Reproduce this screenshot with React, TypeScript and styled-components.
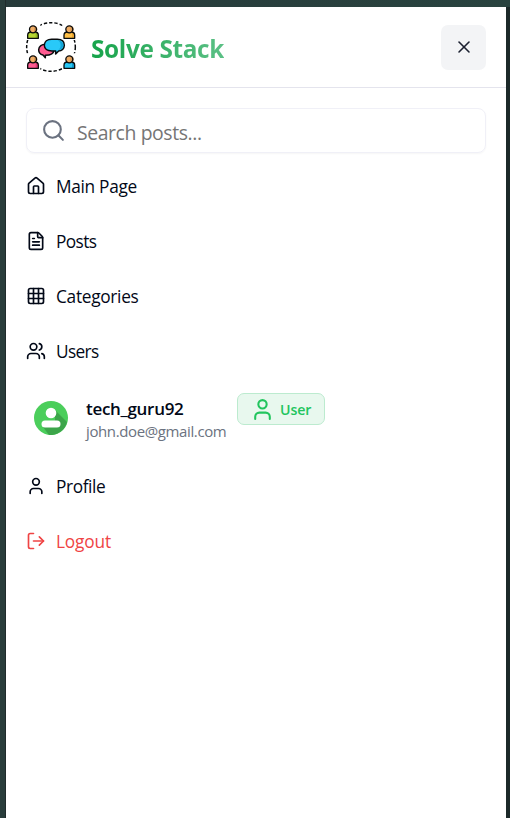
import React from "react";
import styled, { createGlobalStyle } from "styled-components";
import { FileText, Grid3x3, House, LogOut, Search, User, Users, X } from "lucide-react";

const GlobalStyle = createGlobalStyle`
  * { box-sizing: border-box; }
  body { margin: 0; background: #1c2929; font-family: "Segoe UI", "Open Sans", "Noto Sans", sans-serif; }
  button, input { font: inherit; }
`;

const Backdrop = styled.div`
  height: 818px;
  padding: 7px 4px 0 6px;
  overflow: hidden;
  background: linear-gradient(90deg, #293d3b 0 5px, #202b2b 5px 6px, transparent 6px),
    linear-gradient(90deg, #273a3a, #29433f) top / 100% 7px no-repeat, #1c2929;
`;

const Panel = styled.aside`
  height: 811px;
  background: #fff;
  color: #020817;
`;

const Header = styled.header`
  display: flex;
  align-items: center;
  justify-content: space-between;
  height: 81px;
  padding: 0 20px 0 16px;
  border-bottom: 1px solid #e4e4ed;
`;

const Brand = styled.div`
  display: flex;
  align-items: center;
  gap: 11px;
`;

const BrandName = styled.h1`
  margin: 4px 0 0;
  font-size: 24.4px;
  line-height: 36px;
  font-weight: 700;
  letter-spacing: -0.36px;
  white-space: nowrap;
  color: transparent;
  background: linear-gradient(90deg, #16a34a, #5bc085);
  background-clip: text;
`;

const CloseButton = styled.button`
  display: grid;
  place-items: center;
  width: 45px;
  height: 45px;
  padding: 0;
  border: 0;
  border-radius: 7px;
  background: #f3f4f6;
  color: #1b2030;
`;

const Content = styled.div`
  padding: 20px;
`;

const SearchField = styled.label`
  display: flex;
  align-items: center;
  gap: 11px;
  height: 45px;
  padding: 0 14px;
  border: 1px solid #f0f0f7;
  border-radius: 8px;
  box-shadow: 0 1px 2px rgba(0, 0, 0, 0.04);
  color: #6b7280;
`;

const SearchInput = styled.input`
  flex: 1;
  min-width: 0;
  height: 40px;
  padding: 3px 0 0;
  border: 0;
  outline: 0;
  background: transparent;
  font-size: 19.4px;
  letter-spacing: -0.4px;
  &::placeholder { color: #757575; opacity: 1; }
`;

const Menu = styled.nav`
  display: flex;
  flex-direction: column;
  gap: 30px;
  padding-top: 20px;
`;

const MenuItem = styled.a<{ $danger?: boolean; $tracking: number }>`
  display: flex;
  align-items: center;
  gap: 10px;
  height: 25px;
  color: ${({ $danger }) => ($danger ? "#ef4444" : "#020817")};
  font-size: 17.3px;
  letter-spacing: ${({ $tracking }) => $tracking}px;
  svg { flex: none; }
  span { padding-top: 2px; }
`;

const Account = styled.section`
  display: flex;
  height: 50px;
  align-items: flex-start;
  padding: 1px 0 0 8px;
`;

const AccountText = styled.div`
  width: 159px;
  padding: 3px 0 0 18px;
  white-space: nowrap;
`;

const Username = styled.div`
  font-size: 17px;
  line-height: 24px;
  font-weight: 600;
  letter-spacing: -0.3px;
`;

const Email = styled.div`
  color: #6b7280;
  font-size: 15px;
  line-height: 20px;
  letter-spacing: -0.38px;
`;

const RoleBadge = styled.span`
  display: flex;
  align-items: center;
  gap: 5px;
  width: 88px;
  height: 32px;
  margin: -1px 0 0 10px;
  padding: 0 0 0 12px;
  border: 1px solid #bcebcf;
  border-radius: 7px;
  background: #e8f8ee;
  color: #22c55e;
  font-size: 14.2px;
  font-weight: 600;
  letter-spacing: -0.15px;
  svg { flex: none; }
  span { padding-top: 1px; }
`;

const AvatarIcon = styled.svg`
  flex: none;
  margin-top: 7px;
`;

function Member({ x, y, shirt, shade }: { x: number; y: number; shirt: string; shade: string }) {
  return (
    <g transform={`translate(${x} ${y})`}>
      <path d="M-16 27v-9Q-16 8-6 8H6q10 0 10 10v9z" fill={shirt} />
      <path d="M6 8q10 0 10 10v9H8V15z" fill={shade} />
      <path d="M-16 27v-9Q-16 8-6 8H6q10 0 10 10v9z" stroke="#080b0d" strokeWidth="4" strokeLinejoin="round" />
      <circle r="10.5" fill="#f1ad65" />
      <path d="M3-10a10 10 0 0 1 0 20z" fill="#d99752" />
      <circle r="10.5" stroke="#080b0d" strokeWidth="4" />
    </g>
  );
}

function Logo() {
  return (
    <svg width="58" height="58" viewBox="0 0 174 174" fill="none" aria-hidden="true">
      <circle cx="87" cy="87" r="73" stroke="#080b0d" strokeWidth="4.4" strokeDasharray="10 6" />
      <g fill="#fff">
        <path d="M12 16h43v50H12zM121 16h43v50h-43zM12 106h43v50H12zM121 106h43v50h-43z" />
      </g>
      <Member x={33} y={34} shirt="#b6d532" shade="#91b51f" />
      <Member x={142} y={34} shirt="#ffc149" shade="#eaa52f" />
      <Member x={33} y={124} shirt="#ff5b91" shade="#df3973" />
      <Member x={142} y={124} shirt="#28c7f6" shade="#109bcd" />
      <g stroke="#080b0d" strokeWidth="4.5" strokeLinejoin="round">
        <path d="M73 79c-13-2-23 7-23 16 0 9 6 14 13 16l7 8v-7c14 0 25-5 26-16V82z" fill="#ff5b91" />
        <path d="M89 64h17c13 0 21 7 21 18 0 10-8 17-17 17l-9 9v-9H89c-13 0-22-7-22-17 0-11 9-18 22-18z" fill="#29c9f8" />
      </g>
      <path d="M108 67c22 3 20 27 2 29 8-8 9-21-2-29z" fill="#13a4d7" />
    </svg>
  );
}

function Avatar() {
  return (
    <AvatarIcon width="34" height="34" viewBox="0 0 34 34" aria-hidden="true">
      <circle cx="17" cy="17" r="17" fill="#4bce5b" />
      <path d="M21 9 33 21A17 17 0 0 1 15 34L9 26l12-5z" fill="#3ca54a" />
      <circle cx="17" cy="12" r="5.3" fill="#fff" />
      <rect x="7.5" y="19.5" width="19" height="7" rx="3.5" fill="#fff" />
    </AvatarIcon>
  );
}

const links = [
  { label: "Main Page", icon: House, tracking: -0.3 },
  { label: "Posts", icon: FileText, tracking: -0.6 },
  { label: "Categories", icon: Grid3x3, tracking: -0.3 },
  { label: "Users", icon: Users, tracking: -0.65 },
];

export default function App() {
  return (
    <>
      <GlobalStyle />
      <Backdrop>
        <Panel>
          <Header>
            <Brand>
              <Logo />
              <BrandName>Solve Stack</BrandName>
            </Brand>
            <CloseButton aria-label="Close menu"><X size={20} strokeWidth={1.9} /></CloseButton>
          </Header>
          <Content>
            <SearchField>
              <Search size={25} strokeWidth={2} />
              <SearchInput placeholder="Search posts..." />
            </SearchField>
            <Menu>
              {links.map(({ label, icon: Icon, tracking }) => (
                <MenuItem key={label} $tracking={tracking}>
                  <Icon size={20} />
                  <span>{label}</span>
                </MenuItem>
              ))}
              <Account>
                <Avatar />
                <AccountText>
                  <Username>tech_guru92</Username>
                  <Email>john.doe@gmail.com</Email>
                </AccountText>
                <RoleBadge><User size={25} strokeWidth={2} /><span>User</span></RoleBadge>
              </Account>
              <MenuItem $tracking={-0.4}><User size={20} /><span>Profile</span></MenuItem>
              <MenuItem $danger $tracking={-0.15}><LogOut size={20} /><span>Logout</span></MenuItem>
            </Menu>
          </Content>
        </Panel>
      </Backdrop>
    </>
  );
}
